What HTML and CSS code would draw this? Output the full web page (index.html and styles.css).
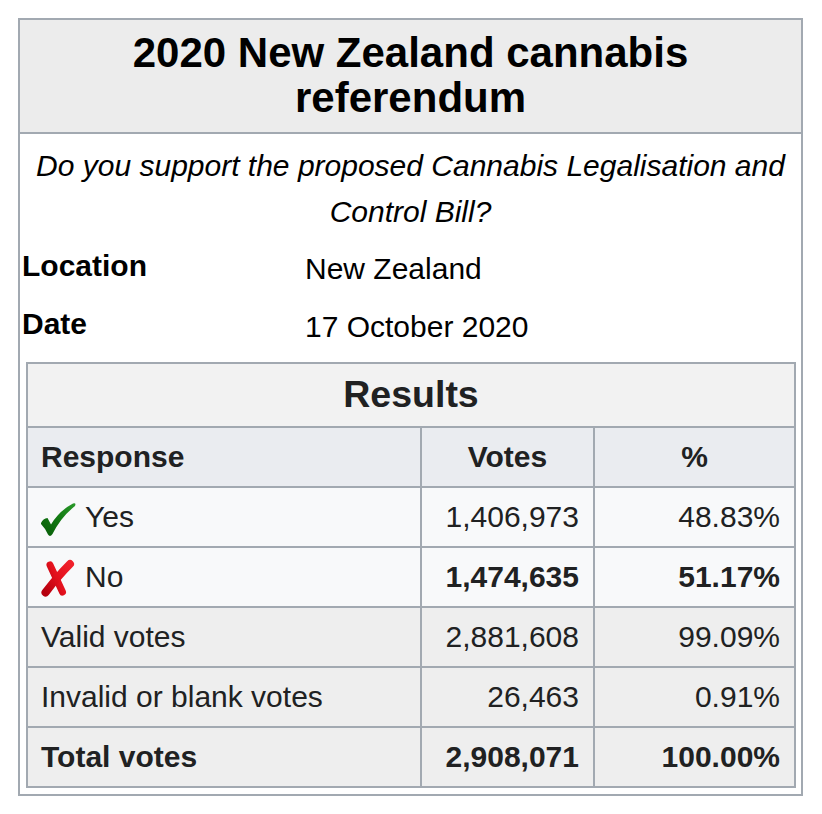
FILE: index.html
```html
<!DOCTYPE html>
<html lang="en">
<head>
<meta charset="utf-8">
<title>2020 New Zealand cannabis referendum</title>
<link rel="stylesheet" href="styles.css">
</head>
<body>
<div class="infobox">
  <div class="title">2020 New Zealand cannabis referendum</div>
  <div class="question">Do you support the proposed Cannabis Legalisation and Control Bill?</div>
  <div class="facts">
    <div class="label">Location</div>
    <div class="value">New Zealand</div>
    <div class="label">Date</div>
    <div class="value">17 October 2020</div>
  </div>
  <div class="results">
    <div class="caption">Results</div>
    <div class="cell head left">Response</div>
    <div class="cell head center">Votes</div>
    <div class="cell head center">%</div>

    <div class="cell choice">
      <svg class="icon" width="36" height="40" viewBox="0 0 36 40" aria-hidden="true">
        <defs>
          <linearGradient id="gchk" x1="0" y1="1" x2="1" y2="0">
            <stop offset="0" stop-color="#075a07"/>
            <stop offset="0.5" stop-color="#127812"/>
            <stop offset="1" stop-color="#2a9a2a"/>
          </linearGradient>
        </defs>
        <path d="M0 26 Q2 21.5 6.5 21 L10 27.5 Q18 14 32 6.5 Q35.5 5.5 34 9 Q20 20 11.5 37 Q9 40.5 7 37.5 Q4 31 0 27 Z" fill="url(#gchk)"/>
      </svg>
      <span>Yes</span>
    </div>
    <div class="cell num">1,406,973</div>
    <div class="cell num">48.83%</div>

    <div class="cell choice">
      <svg class="icon" width="36" height="42" viewBox="0 0 36 42" aria-hidden="true">
        <defs>
          <linearGradient id="gx" x1="0" y1="1" x2="1" y2="0">
            <stop offset="0" stop-color="#b5000e"/>
            <stop offset="0.5" stop-color="#e2101c"/>
            <stop offset="1" stop-color="#f0202a"/>
          </linearGradient>
        </defs>
        <path d="M9 9 Q15 22 21.5 36" stroke="url(#gx)" stroke-width="7" stroke-linecap="round" fill="none"/>
        <path d="M29 8 Q17 20 4.5 36.5" stroke="url(#gx)" stroke-width="8" stroke-linecap="round" fill="none"/>
      </svg>
      <span>No</span>
    </div>
    <div class="cell num bold">1,474,635</div>
    <div class="cell num bold">51.17%</div>

    <div class="cell sum">Valid votes</div>
    <div class="cell sum num">2,881,608</div>
    <div class="cell sum num">99.09%</div>

    <div class="cell sum">Invalid or blank votes</div>
    <div class="cell sum num">26,463</div>
    <div class="cell sum num">0.91%</div>

    <div class="cell sum bold">Total votes</div>
    <div class="cell sum num bold">2,908,071</div>
    <div class="cell sum num bold">100.00%</div>
  </div>
</div>
</body>
</html>
```
FILE: styles.css
```css
html, body {
  margin: 0;
  padding: 0;
  background: #ffffff;
}

body {
  font-family: "Liberation Sans", Arial, Helvetica, sans-serif;
  color: #000000;
}

.infobox {
  box-sizing: border-box;
  width: 785px;
  margin: 18px 0 0 18px;
  border: 2px solid #a2a9b1;
  background: #ffffff;
}

.title {
  background: #ececec;
  border-bottom: 2px solid #a2a9b1;
  font-size: 42px;
  font-weight: bold;
  line-height: 45px;
  text-align: center;
  padding: 10px 8px 12px;
}

.question {
  font-size: 30px;
  font-style: italic;
  line-height: 46.7px;
  text-align: center;
  padding: 8.5px 4px 0;
}

.facts {
  display: grid;
  grid-template-columns: 283px 1fr;
  row-gap: 8.5px;
  margin-top: 6.5px;
  padding-left: 2px;
  font-size: 30px;
  line-height: 47px;
}

.facts .label {
  font-weight: bold;
  align-self: start;
}

.facts .value {
  padding-top: 2.5px;
}

.results {
  display: grid;
  grid-template-columns: 392px 171px 199px;
  grid-template-rows: 62px repeat(6, 58px);
  gap: 2px;
  padding: 2px;
  margin: 12px 5px 6px 6px;
  background: #a2a9b1;
  color: #202122;
  font-size: 30px;
}

.caption {
  grid-column: 1 / 4;
  background: #f2f2f2;
  font-size: 37.5px;
  font-weight: bold;
  display: flex;
  align-items: center;
  justify-content: center;
}

.cell {
  display: flex;
  align-items: center;
  padding: 0 14px 0 13px;
  background: #f8f9fa;
  white-space: nowrap;
}

.cell.head {
  background: #eaecf0;
  font-weight: bold;
}

.cell.center {
  justify-content: center;
  padding: 0;
}

.cell.num {
  justify-content: flex-end;
}

.cell.sum {
  background: #eeeeee;
}

.bold {
  font-weight: bold;
}

.choice {
  gap: 8px;
}

.icon {
  flex: none;
  display: block;
}
```
